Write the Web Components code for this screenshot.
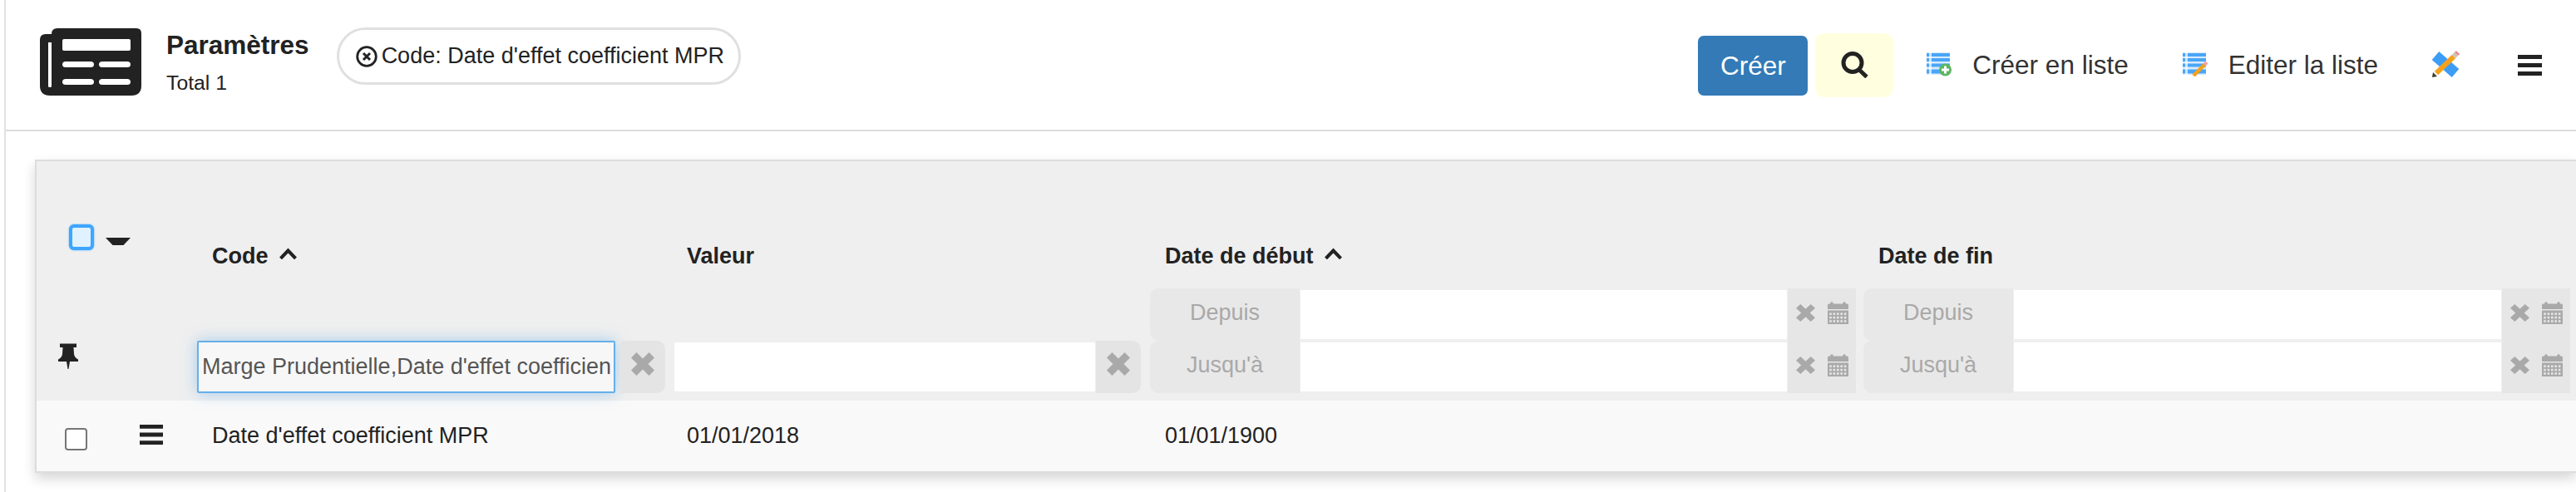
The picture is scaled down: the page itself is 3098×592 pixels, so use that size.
<!DOCTYPE html>
<html lang="fr">
<head>
<meta charset="utf-8">
<title>Paramètres</title>
<style>
html,body{margin:0;padding:0;background:#fff;overflow:hidden;height:592px}
body{font-family:"Liberation Sans",Arial,sans-serif;color:#222}
</style>
</head>
<body>
<app-shell>
  <page-header slot="header">
    <x-icon name="news" w="122" h="81" style="margin-bottom:7px"></x-icon>
    <title-block>Paramètres<span slot="sub">Total 1</span></title-block>
    <filter-pill>Code: Date d'effet coefficient MPR</filter-pill>
    <primary-button slot="actions">Créer</primary-button>
    <search-button slot="actions"></search-button>
    <action-link slot="actions" icon="listadd" style="margin-left:39px">Créer en liste</action-link>
    <action-link slot="actions" icon="listedit" style="margin-left:64px">Editer la liste</action-link>
    <x-icon slot="actions" name="tools" w="38" h="35" style="margin-left:61px;margin-bottom:4px;filter:blur(.35px)"></x-icon>
    <x-icon slot="actions" name="bars" w="29" h="25" style="margin-left:69px;margin-bottom:-1px"></x-icon>
  </page-header>
  <data-table slot="table">
    <head-title slot="titles" sort>Code</head-title>
    <head-title slot="titles">Valeur</head-title>
    <head-title slot="titles" sort>Date de début</head-title>
    <head-title slot="titles">Date de fin</head-title>

    <text-filter slot="filters" focused pr="8" value="Marge Prudentielle,Date d'effet coefficien"></text-filter>
    <text-filter slot="filters" pl="3" pr="11"></text-filter>
    <date-filter slot="filters" pr="9"></date-filter>
    <date-filter slot="filters" pr="7"></date-filter>

    <table-cell slot="cells">Date d'effet coefficient MPR</table-cell>
    <table-cell slot="cells">01/01/2018</table-cell>
    <table-cell slot="cells">01/01/1900</table-cell>
    <table-cell slot="cells"></table-cell>
  </data-table>
</app-shell>
<script>
const A='#a9a9a9';
function calendar(){
  let d='';
  for(let r=0;r<3;r++)for(let c=0;c<5;c++)d+=`<rect x="${2.2+c*4.4}" y="${13.4+r*4.4}" width="2.6" height="2.6" fill="#e6e6e6"/>`;
  return `<path fill="${A}" d="M0 9V4q0-1.5 1.5-1.5H3Q3.5 0 5 0t2 2.500H18Q18.500 0 20 0t2 2.500h1.500Q25 2.500 25 4v5z"/><rect y="10.500" width="25" height="16.500" fill="${A}"/>${d}`;
}
function listIcon(){
  return `<rect x="1" y="1" width="28" height="27" fill="#d8ebfc"/>
  <rect x="1" y="2" width="28" height="4" fill="#4aa5f7"/><rect x="1" y="8" width="28" height="4" fill="#4aa5f7"/><rect x="1" y="14.500" width="28" height="4" fill="#4aa5f7"/><rect x="1" y="21.500" width="28" height="5" fill="#4aa5f7"/>
  <rect x="4" y="1" width="3" height="27" fill="#fff" opacity=".7"/>`;
}
const ICONS={
  news:[`0 0 122 81`,`<path fill="#222" fill-rule="evenodd" d="M14 7Q14 0 21 0H116Q122 0 122 6V69Q122 81 110 81H12Q0 81 0 69V14Q0 7 7 7ZM10 17V70Q10 71 12 71 14 71 14 70V17ZM29 13Q27 13 27 15V25Q27 27 29 27H107Q109 27 109 25V15Q109 13 107 13ZM31 40Q27 40 27 43.500 27 47 31 47H61Q65 47 65 43.500 65 40 61 40ZM75 40Q71 40 71 43.500 71 47 75 47H105Q109 47 109 43.500 109 40 105 40ZM31 61Q27 61 27 64.500 27 68 31 68H61Q65 68 65 64.500 65 61 61 61ZM75 61Q71 61 71 64.500 71 68 75 68H105Q109 68 109 64.500 109 61 105 61Z"/>`],
  cx:[`0 0 26 26`,`<circle cx="13" cy="13" r="11.300" fill="none" stroke="#222" stroke-width="2.800"/><path d="M9 9l8 8M17 9l-8 8" stroke="#222" stroke-width="3" fill="none"/>`],
  search:[`0 0 33 32`,`<circle cx="14" cy="13.500" r="11" fill="none" stroke="#222" stroke-width="5"/><path d="M22 22l9 8.500" stroke="#222" stroke-width="5" fill="none"/>`],
  listadd:[`0 0 32 30`,`${listIcon()}<circle cx="23.500" cy="22" r="7.500" fill="#5cb561"/><path d="M23.500 17.500v9M19 22h9" stroke="#fff" stroke-width="3"/>`],
  listedit:[`0 0 32 30`,`${listIcon()}<path d="M14 29L27 16" stroke="#f5a11a" stroke-width="4.500"/><path d="M27 16l3-3" stroke="#f2a3a3" stroke-width="4.500"/>`],
  tools:[`0 0 38 35`,`<path d="M8 8L32 29" stroke="#3d9df5" stroke-width="13"/><path d="M9 29L30 9" stroke="#f5a11a" stroke-width="6"/><path d="M30 9l3-3" stroke="#c9c4bc" stroke-width="6"/><path d="M33 6l2-2" stroke="#ee8a8a" stroke-width="6"/><path d="M4 34l1-6 5 5z" fill="#3d3d2d"/>`],
  bars:[`0 0 29 25`,`<path fill="#222" d="M0 0h29v5H0zM0 10h29v5H0zM0 20h29v5H0z"/>`],
  caret:[`0 0 30 9`,`<path fill="#222" d="M0 0h30l-8.500 9h-13z"/>`],
  pin:[`0 0 24 31`,`<path fill="#222" d="M2 0.500H22V5H18.500L19 13Q19.500 17 24 19.500V22H14L12.500 31H11.500L10 22H0V19.500Q4.500 17 5 13L5.500 5H2z"/>`],
  chev:[`0 0 23 14`,`<path d="M2.500 13L11.500 3.500 20.500 13" fill="none" stroke="#222" stroke-width="4"/>`],
  x:[`1 1 26 26`,`<path d="M4 4L24 24M24 4L4 24" stroke="${A}" stroke-width="8.500" fill="none"/>`],
  cal:[`0 0 25 27`,calendar()],
};

function def(name,css,html,extra){
  customElements.define(name,class extends HTMLElement{
    constructor(){super();const s=this.attachShadow({mode:'open'});s.innerHTML=`<style>${css}</style>${typeof html==='function'?html(this):html}`;}
    connectedCallback(){extra&&extra(this)}
  });
}

customElements.define('x-icon',class extends HTMLElement{
  connectedCallback(){
    if(this.shadowRoot)return;
    const s=this.attachShadow({mode:'open'});
    const [vb,body]=ICONS[this.getAttribute('name')];
    const w=this.getAttribute('w'),h=this.getAttribute('h');
    s.innerHTML=`<style>:host{display:block;flex:none;width:${w}px;height:${h}px}svg{display:block}</style><svg xmlns="http://www.w3.org/2000/svg" width="${w}" height="${h}" viewBox="${vb}" preserveAspectRatio="none">${body}</svg>`;
  }
});

def('app-shell',`:host{display:block;height:592px;margin-left:5px;border-left:2px solid #e2e2e2;box-sizing:border-box;overflow:hidden}
.t{padding:34px 0 0 35px}`,`<slot name="header"></slot><div class="t"><slot name="table"></slot></div>`);

def('page-header',`:host{display:flex;align-items:center;box-sizing:content-box;height:156px;border-bottom:2px solid #ddd;padding-left:41px;padding-right:41px}
.sp{flex:1}.a{display:flex;align-items:center}`,`<slot></slot><div class="sp"></div><div class="a"><slot name="actions"></slot></div>`);

def('title-block',`:host{display:block;margin-left:30px;margin-bottom:7px;color:#222;flex:none}
.t{font-weight:700;font-size:31.5px;line-height:36px}
.s{font-size:24.750px;line-height:28px;margin-top:14px}`,`<div class="t"><slot></slot></div><div class="s"><slot name="sub"></slot></div>`);

def('filter-pill',`:host{display:flex;align-items:center;gap:5px;flex:none;box-sizing:border-box;height:69px;width:486px;margin-left:33px;margin-bottom:21px;padding-left:20px;border:3px solid #e0e0e0;border-radius:35px;font-size:27px;color:#222;white-space:nowrap}`,
`<x-icon name="cx" w="26" h="26"></x-icon><span><slot></slot></span>`);

def('primary-button',`:host{display:flex;align-items:center;justify-content:center;box-sizing:border-box;width:132px;height:72px;background:#337ab7;border-radius:7px;color:#fff;font-size:31.5px;margin-top:2px}`,`<slot></slot>`);

def('search-button',`:host{display:flex;align-items:center;justify-content:center;box-sizing:border-box;width:94px;height:77px;margin-left:9px;background:#ffffe0;border-radius:11px;padding-bottom:1px}`,`<x-icon name="search" w="33" h="32"></x-icon>`);

def('action-link',`:host{display:flex;align-items:center;gap:24px;color:#333;font-size:31.5px;white-space:nowrap}
x-icon{margin-bottom:3px;filter:blur(.35px)}`,
el=>`<x-icon name="${el.getAttribute('icon')}" w="32" h="30"></x-icon><span><slot></slot></span>`);

def('data-table',`:host{display:block;--cols:193px 571px 575px 858px 1fr;border:solid #ddd;border-width:2px 0 2px 2px;box-shadow:0 7px 14px rgba(0,0,0,.16);background:#efefef;color:#222}
.titles,.filters,.row{display:grid;grid-template-columns:var(--cols)}
.titles{height:153px}
.filters{height:135px;box-sizing:border-box;padding-bottom:9px}
.row{height:85px;background:#f9f9f9;align-items:center}
.c0{display:flex}
.hc{align-items:flex-start;gap:14px;padding:76px 0 0 39px}
.box{box-sizing:border-box;width:30px;height:31px;background:#e0f2ff;border:4px solid #3ea6ff;border-radius:6px;box-shadow:0 0 2px #3ea6ff}
.caret{margin-top:16px}
.fc{padding:66px 0 0 26px}
.rc{align-items:center;padding-left:34px;gap:63px}
.chk{box-sizing:border-box;width:27px;height:27px;margin:7px 0 0;appearance:none;-webkit-appearance:none;background:#fff;border:2px solid #767676;border-radius:4px}
.rb{margin-bottom:3px}`,
`<div class="titles"><div class="c0 hc"><span class="box"></span><x-icon class="caret" name="caret" w="30" h="9"></x-icon></div><slot name="titles"></slot></div>
<div class="filters"><div class="c0 fc"><x-icon name="pin" w="24" h="31"></x-icon></div><slot name="filters"></slot></div>
<div class="row"><div class="c0 rc"><input class="chk" type="checkbox" aria-label="Sélection"><x-icon class="rb" name="bars" w="28" h="24"></x-icon></div><slot name="cells"></slot></div>`);

def('head-title',`:host{display:flex;align-items:flex-start;gap:12px;padding:99px 0 0 18px;font-weight:700;font-size:27px;line-height:31px;white-space:nowrap}
x-icon{margin-top:5px}`,
el=>`<span><slot></slot></span>${el.hasAttribute('sort')?'<x-icon name="chev" w="23" h="14"></x-icon>':''}`);

def('table-cell',`:host{display:block;padding-left:18px;font-size:27px;line-height:31px;margin-bottom:1px;white-space:nowrap}`,`<slot></slot>`);

def('text-filter',`:host{display:flex;align-self:end;height:63px;box-sizing:border-box;font-size:27px}
.in{flex:1;min-width:0;box-sizing:border-box;margin:2px 1px 2px 0;background:#fff;border-radius:2px;padding:0 4px;display:flex;align-items:center;white-space:nowrap;overflow:hidden;color:#555}
.in.f{margin:0 6px 0 0;background:#f7f7f7;border:2px solid #66afe9;box-shadow:0 0 18px rgba(102,175,233,.55);padding:0 4px}
.add{flex:none;width:54px;background:#e4e4e4;border-radius:0 10px 10px 0;display:flex;align-items:center;justify-content:center;padding-bottom:8px;box-sizing:border-box}`,
el=>{
  const f=el.hasAttribute('focused');
  el.style.paddingLeft=(el.getAttribute('pl')||0)+'px';
  el.style.paddingRight=(el.getAttribute('pr')||0)+'px';
  return `<div class="in${f?' f':''}">${el.getAttribute('value')||''}</div><div class="add"><x-icon name="x" w="28" h="28"></x-icon></div>`;
});

def('date-filter',`:host{display:grid;grid-template-columns:180px 1fr 82px;grid-template-rows:63px 63px;column-gap:1px;font-size:27px;color:#a9a9a9}
.l{background:#e8e8e8;border-radius:10px 0 0 10px;display:flex;align-items:center;justify-content:center;padding-bottom:4px;box-sizing:border-box}
.in{background:#fff;margin:2px 0}
.r{grid-column:3;grid-row:1/3;background:#e6e6e6;display:grid;grid-template-rows:63px 63px}
.ri{display:flex;align-items:center;padding:0 0 4px 10px;gap:15px;box-sizing:border-box}`,
el=>{
  el.style.paddingRight=(el.getAttribute('pr')||0)+'px';
  const ri=`<div class="ri"><x-icon name="x" w="23" h="21"></x-icon><x-icon name="cal" w="25" h="27"></x-icon></div>`;
  return `<div class="l">Depuis</div><div class="in"></div><div class="r">${ri}${ri}</div><div class="l" style="grid-column:1;grid-row:2">Jusqu'à</div><div class="in" style="grid-column:2;grid-row:2"></div>`;
});
</script>
</body>
</html>
